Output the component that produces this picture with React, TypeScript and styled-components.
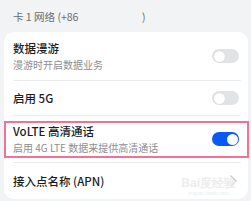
import React from "react";
import styled, { createGlobalStyle } from "styled-components";

const GlobalStyle = createGlobalStyle`
  html, body {
    margin: 0;
    padding: 0;
    background: #f1f3f5;
  }
  body {
    width: 251px;
    height: 201px;
    overflow: hidden;
    font-family: "Noto Sans CJK SC", "Noto Sans", sans-serif;
  }
`;

const Page = styled.div`
  width: 251px;
  height: 201px;
  background: #f1f3f5;
  display: flex;
  flex-direction: column;
`;
const SectionHead = styled.div`
  height: 32px;
  flex-shrink: 0;
  padding-left: 13px;
  display: flex;
  align-items: center;
  font-size: 10.5px;
  color: #6b6d70;
  white-space: pre;
`;
const Card = styled.div`
  position: relative;
  margin: 0 3px 2px 4px;
  background: #fff;
  border-radius: 10px;
  height: 167px;
  display: flex;
  flex-direction: column;
`;
const Row = styled.div<{ $h: number; $marked?: boolean }>`
  position: relative;
  height: ${(p) => p.$h}px;
  flex-shrink: 0;
  padding: 0 9px;
  display: flex;
  align-items: center;
  justify-content: space-between;
  ${(p) =>
    p.$marked &&
    `
    &::after {
      content: "";
      position: absolute;
      left: 0;
      right: -1px;
      top: 5px;
      bottom: 4px;
      border: 2px solid #ef7395;
      pointer-events: none;
    }
  `}
`;
const Texts = styled.div`
  display: flex;
  flex-direction: column;
  gap: 2px;
`;
const Title = styled.div`
  font-size: 11.5px;
  font-weight: 500;
  color: #1b1c1e;
  line-height: 15px;
`;
const Sub = styled.div`
  font-size: 10px;
  color: #8c8e92;
  line-height: 13px;
`;
const Divider = styled.div`
  height: 1px;
  flex-shrink: 0;
  margin: 0 7px 0 9px;
  background: #ebecee;
`;
const Toggle = styled.div<{ $on?: boolean }>`
  width: 27px;
  height: 14px;
  border-radius: 7px;
  background: ${(p) => (p.$on ? "#0a59f7" : "#e2e3e5")};
  position: relative;
  flex-shrink: 0;
  &::after {
    content: "";
    position: absolute;
    top: 1.5px;
    ${(p) => (p.$on ? "right: 1.5px;" : "left: 1.5px;")}
    width: 11px;
    height: 11px;
    border-radius: 50%;
    background: #fff;
    box-shadow: 0 0 1px rgba(0, 0, 0, 0.15);
  }
`;
const Chevron = styled.svg`
  width: 7px;
  height: 12px;
  margin-right: 2px;
`;
const Watermark = styled.div`
  position: absolute;
  right: 12px;
  bottom: 3px;
  display: flex;
  flex-direction: column;
  align-items: center;
  color: #eceded;
  font-family: "Liberation Sans", sans-serif;
  pointer-events: none;
`;
const WatermarkLogo = styled.div`
  font-size: 12px;
  font-weight: bold;
  line-height: 13px;
`;
const WatermarkUrl = styled.div`
  font-size: 5px;
  line-height: 6px;
`;

const App = () => {
  return (
    <Page>
      <GlobalStyle />
      <SectionHead>{"卡 1 网络 (+86                           )"}</SectionHead>
      <Card>
        <Row $h={48}>
          <Texts>
            <Title>数据漫游</Title>
            <Sub>漫游时开启数据业务</Sub>
          </Texts>
          <Toggle />
        </Row>
        <Divider />
        <Row $h={34}>
          <Title>启用 5G</Title>
          <Toggle />
        </Row>
        <Divider />
        <Row $h={46} $marked>
          <Texts>
            <Title>VoLTE 高清通话</Title>
            <Sub>启用 4G LTE 数据来提供高清通话</Sub>
          </Texts>
          <Toggle $on />
        </Row>
        <Divider />
        <Row $h={36}>
          <Title>接入点名称 (APN)</Title>
          <Chevron viewBox="0 0 7 12">
            <path d="M1 1l5 5-5 5" fill="none" stroke="#c4c6c9" strokeWidth="1.3" strokeLinecap="round" strokeLinejoin="round" />
          </Chevron>
        </Row>
        <Watermark>
          <WatermarkLogo>Bai度经验</WatermarkLogo>
          <WatermarkUrl>jingyan.baidu.com</WatermarkUrl>
        </Watermark>
      </Card>
    </Page>
  );
};

export default App;
